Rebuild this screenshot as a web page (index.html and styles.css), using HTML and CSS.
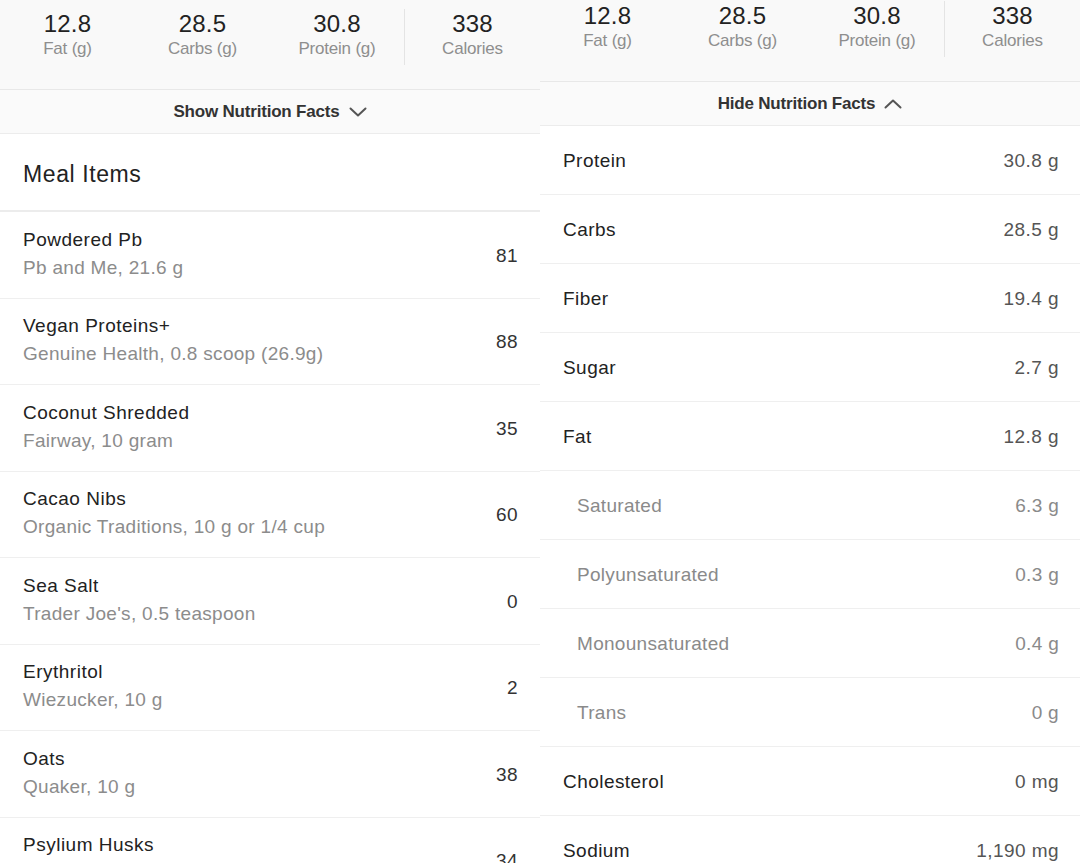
FILE: index.html
```html
<!DOCTYPE html>
<html>
<head>
<meta charset="utf-8">
<link rel="stylesheet" href="styles.css">
</head>
<body>
<div class="screens">
  <section class="panel">
    <div class="summary">
      <div class="stat"><div class="num">12.8</div><div class="lbl">Fat (g)</div></div>
      <div class="stat"><div class="num">28.5</div><div class="lbl">Carbs (g)</div></div>
      <div class="stat sep"><div class="num">30.8</div><div class="lbl">Protein (g)</div></div>
      <div class="stat"><div class="num">338</div><div class="lbl">Calories</div></div>
    </div>
    <div class="toggle">Show Nutrition Facts
      <svg class="chev" width="18" height="10" viewBox="0 0 18 10"><path d="M1.5 1.5 L9 8.5 L16.5 1.5" fill="none" stroke="#555" stroke-width="2" stroke-linecap="round" stroke-linejoin="round"/></svg>
    </div>
    <div class="meal-head">Meal Items</div>
    <ul class="items">
      <li class="item"><div class="txt"><div class="name">Powdered Pb</div><div class="sub">Pb and Me, 21.6 g</div></div><div class="cal">81</div></li>
      <li class="item"><div class="txt"><div class="name">Vegan Proteins+</div><div class="sub">Genuine Health, 0.8 scoop (26.9g)</div></div><div class="cal">88</div></li>
      <li class="item"><div class="txt"><div class="name">Coconut Shredded</div><div class="sub">Fairway, 10 gram</div></div><div class="cal">35</div></li>
      <li class="item"><div class="txt"><div class="name">Cacao Nibs</div><div class="sub">Organic Traditions, 10 g or 1/4 cup</div></div><div class="cal">60</div></li>
      <li class="item"><div class="txt"><div class="name">Sea Salt</div><div class="sub">Trader Joe's, 0.5 teaspoon</div></div><div class="cal">0</div></li>
      <li class="item"><div class="txt"><div class="name">Erythritol</div><div class="sub">Wiezucker, 10 g</div></div><div class="cal">2</div></li>
      <li class="item"><div class="txt"><div class="name">Oats</div><div class="sub">Quaker, 10 g</div></div><div class="cal">38</div></li>
      <li class="item"><div class="txt"><div class="name">Psylium Husks</div><div class="sub">Now Foods, 10 g</div></div><div class="cal">34</div></li>
    </ul>
  </section>
  <section class="panel right">
    <div class="scroll">
      <div class="summary">
        <div class="stat"><div class="num">12.8</div><div class="lbl">Fat (g)</div></div>
        <div class="stat"><div class="num">28.5</div><div class="lbl">Carbs (g)</div></div>
        <div class="stat sep"><div class="num">30.8</div><div class="lbl">Protein (g)</div></div>
        <div class="stat"><div class="num">338</div><div class="lbl">Calories</div></div>
      </div>
      <div class="toggle">Hide Nutrition Facts
        <svg class="chev" width="18" height="10" viewBox="0 0 18 10"><path d="M1.5 8.5 L9 1.5 L16.5 8.5" fill="none" stroke="#555" stroke-width="2" stroke-linecap="round" stroke-linejoin="round"/></svg>
      </div>
      <ul class="facts">
        <li class="fact"><span>Protein</span><span class="val">30.8 g</span></li>
        <li class="fact"><span>Carbs</span><span class="val">28.5 g</span></li>
        <li class="fact"><span>Fiber</span><span class="val">19.4 g</span></li>
        <li class="fact"><span>Sugar</span><span class="val">2.7 g</span></li>
        <li class="fact"><span>Fat</span><span class="val">12.8 g</span></li>
        <li class="fact minor"><span>Saturated</span><span class="val">6.3 g</span></li>
        <li class="fact minor"><span>Polyunsaturated</span><span class="val">0.3 g</span></li>
        <li class="fact minor"><span>Monounsaturated</span><span class="val">0.4 g</span></li>
        <li class="fact minor"><span>Trans</span><span class="val">0 g</span></li>
        <li class="fact"><span>Cholesterol</span><span class="val">0 mg</span></li>
        <li class="fact"><span>Sodium</span><span class="val">1,190 mg</span></li>
      </ul>
    </div>
  </section>
</div>
</body>
</html>
```
FILE: styles.css
```css
* { box-sizing: border-box; }
html, body { margin: 0; padding: 0; background: #fff; }
body {
  font-family: "Liberation Sans", Arial, sans-serif;
  color: #222;
  -webkit-font-smoothing: antialiased;
}
.screens {
  display: flex;
  width: 1080px;
  height: 863px;
  overflow: hidden;
}
.panel {
  width: 540px;
  flex: 0 0 540px;
  height: 863px;
  overflow: hidden;
  background: #fff;
}
.right .scroll { margin-top: -8px; }

.summary {
  height: 90px;
  background: #f9f9f9;
  border-bottom: 1px solid #e8e8e8;
  display: grid;
  grid-template-columns: repeat(4, 1fr);
  padding-top: 10px;
}
.stat {
  display: flex;
  flex-direction: column;
  align-items: center;
  height: 56px;
  margin-top: -1px;
}
.stat.sep { border-right: 1px solid #e4e4e4; }
.num {
  font-size: 24px;
  line-height: 30px;
  color: #222;
  letter-spacing: 0.2px;
}
.lbl {
  font-size: 17px;
  line-height: 20px;
  color: #8e8e8e;
  letter-spacing: -0.2px;
}
.toggle {
  height: 44px;
  background: #fafafa;
  border-bottom: 1px solid #ececec;
  display: flex;
  align-items: center;
  justify-content: center;
  gap: 9px;
  padding-top: 1px;
  font-size: 17px;
  font-weight: bold;
  color: #333;
  letter-spacing: -0.2px;
}
.chev { display: block; margin-top: -1px; }

.meal-head {
  height: 78px;
  border-bottom: 2px solid #ececec;
  display: flex;
  align-items: center;
  padding: 5px 0 0 23px;
  font-size: 23px;
  letter-spacing: 0.6px;
  color: #222;
}
ul { list-style: none; margin: 0; padding: 0; }
.item {
  height: 86.5px;
  border-bottom: 1px solid #efefef;
  display: flex;
  align-items: center;
  justify-content: space-between;
  padding: 0 22px 0 23px;
}
.name {
  font-size: 19px;
  line-height: 28px;
  color: #222;
  letter-spacing: 0.5px;
  margin-top: -2px;
}
.sub {
  font-size: 19px;
  line-height: 28px;
  color: #8c8c8c;
  letter-spacing: 0.3px;
}
.cal {
  font-size: 19px;
  color: #333;
  padding-top: 2px;
  letter-spacing: 0.4px;
}

.fact {
  height: 69px;
  border-bottom: 1px solid #efefef;
  display: flex;
  align-items: center;
  justify-content: space-between;
  padding: 2px 21px 0 23px;
  font-size: 19px;
  letter-spacing: 0.45px;
  color: #222;
}
.fact .val { color: #555; }
.fact.minor { padding-left: 37px; color: #8a8a8a; letter-spacing: 0.3px; }
.fact.minor .val { color: #8a8a8a; }
```
